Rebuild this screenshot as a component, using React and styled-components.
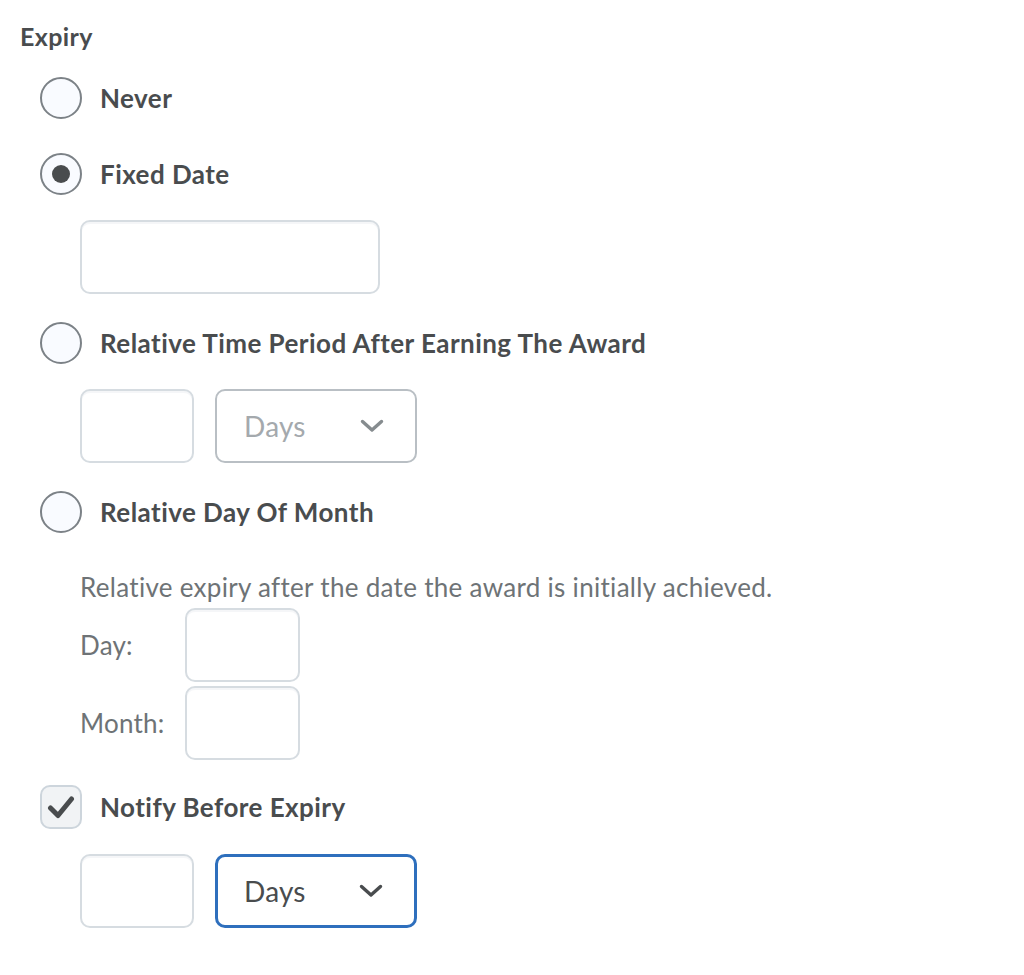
// React
import React from 'react';
// Styled component
import styled, { createGlobalStyle } from 'styled-components';

// Global page styles
const GlobalStyle = createGlobalStyle`
  body {
    margin: 0;
    background: #ffffff;
    font-family: Lato, "Open Sans", sans-serif;
    color: #494c4e;
  }
`;

// Styled page container
const Page = styled.div`
  display: flex;
  flex-direction: column;
  padding: 17px 20px 40px 20px;
`;

// Styled heading
const Heading = styled.h3`
  margin: 0;
  font-size: 25px;
  font-weight: 700;
  letter-spacing: 0.4px;
  line-height: 38px;
`;

// Styled option row (radio / checkbox + label)
const OptionRow = styled.label`
  display: flex;
  align-items: center;
  gap: 18px;
  padding-left: 20px;
  margin-top: ${(p) => p.$top}px;
`;

// Styled radio circle
const Radio = styled.span`
  position: relative;
  width: 42px;
  height: 42px;
  box-sizing: border-box;
  border-radius: 50%;
  border: 2px solid #7c8287;
  background: #f9fbff;
  flex: 0 0 auto;

  &::after {
    content: '';
    display: ${(p) => (p.$checked ? 'block' : 'none')};
    position: absolute;
    left: 50%;
    top: 50%;
    width: 18px;
    height: 18px;
    margin: -9px 0 0 -9px;
    border-radius: 50%;
    background: #494c4e;
  }
`;

// Styled checkbox
const Checkbox = styled.span`
  display: flex;
  align-items: center;
  justify-content: center;
  width: 42px;
  height: 44px;
  box-sizing: border-box;
  border-radius: 10px;
  border: 2px solid #cdd5dc;
  background: #f1f3f5;
  flex: 0 0 auto;
`;

// Styled option label
const OptionLabel = styled.span`
  font-size: 26px;
  font-weight: 700;
  letter-spacing: 0.45px;
  line-height: 30px;
`;

// Styled row of fields
const FieldRow = styled.div`
  display: flex;
  align-items: center;
  gap: 21px;
  padding-left: 60px;
  margin-top: ${(p) => p.$top}px;
`;

// Styled text input
const Input = styled.div`
  width: ${(p) => p.$width}px;
  height: 74px;
  box-sizing: border-box;
  border: 2px solid #d6dce1;
  border-radius: 10px;
  background: #ffffff;
  box-shadow: inset 0 2px 0 0 rgba(185, 194, 208, 0.15);
`;

// Styled select
const Select = styled.div`
  display: flex;
  align-items: center;
  justify-content: space-between;
  width: 202px;
  height: 74px;
  box-sizing: border-box;
  padding: 0 31px 0 ${(p) => (p.$focus ? 26 : 27)}px;
  border: ${(p) => (p.$focus ? '3px solid #2e6fbd' : '2px solid #b9bfc4')};
  border-radius: 10px;
  background: #ffffff;
  font-size: 28px;
  letter-spacing: 0.2px;
  color: ${(p) => (p.$focus ? '#494c4e' : '#a4a9ad')};
`;

// Styled description text
const Description = styled.p`
  margin: 39px 0 0 60px;
  font-size: 26px;
  letter-spacing: 0.3px;
  line-height: 30px;
  color: #6e7376;
`;

// Styled labelled field row
const LabeledField = styled.div`
  display: flex;
  align-items: center;
  padding-left: 60px;
  margin-top: ${(p) => p.$top}px;
`;

// Styled small label
const FieldLabel = styled.span`
  width: 105px;
  font-size: 26px;
  letter-spacing: 0.2px;
  color: #6e7376;
`;

// Chevron icon
const Chevron = ({ color }) => (
  <svg width="24" height="14" viewBox="0 0 24 14">
    <path d="M2.5 2.5 L12 11 L21.5 2.5" fill="none" stroke={color} strokeWidth="3.4" strokeLinecap="round" strokeLinejoin="round" />
  </svg>
);

// Check icon
const Check = () => (
  <svg width="28" height="26" viewBox="0 0 28 26">
    <path d="M3.5 14 L11 21.5 L24.5 5" fill="none" stroke="#494c4e" strokeWidth="5" strokeLinecap="round" strokeLinejoin="round" />
  </svg>
);

/**
 * @description Expiry settings form
 */
const App = () => (
  <>
    <GlobalStyle />
    <Page>
      <Heading>Expiry</Heading>

      <OptionRow $top={22}>
        <Radio />
        <OptionLabel>Never</OptionLabel>
      </OptionRow>

      <OptionRow $top={34}>
        <Radio $checked />
        <OptionLabel>Fixed Date</OptionLabel>
      </OptionRow>

      <FieldRow $top={25}>
        <Input $width={300} />
      </FieldRow>

      <OptionRow $top={28}>
        <Radio />
        <OptionLabel>Relative Time Period After Earning The Award</OptionLabel>
      </OptionRow>

      <FieldRow $top={25}>
        <Input $width={114} />
        <Select>
          Days
          <Chevron color="#868c8f" />
        </Select>
      </FieldRow>

      <OptionRow $top={28}>
        <Radio />
        <OptionLabel>Relative Day Of Month</OptionLabel>
      </OptionRow>

      <Description>Relative expiry after the date the award is initially achieved.</Description>

      <LabeledField $top={6}>
        <FieldLabel>Day:</FieldLabel>
        <Input $width={115} />
      </LabeledField>
      <LabeledField $top={4}>
        <FieldLabel>Month:</FieldLabel>
        <Input $width={115} />
      </LabeledField>

      <OptionRow $top={25}>
        <Checkbox>
          <Check />
        </Checkbox>
        <OptionLabel>Notify Before Expiry</OptionLabel>
      </OptionRow>

      <FieldRow $top={25}>
        <Input $width={114} />
        <Select $focus>
          Days
          <Chevron color="#494c4e" />
        </Select>
      </FieldRow>
    </Page>
  </>
);

// Default export
export default App;
